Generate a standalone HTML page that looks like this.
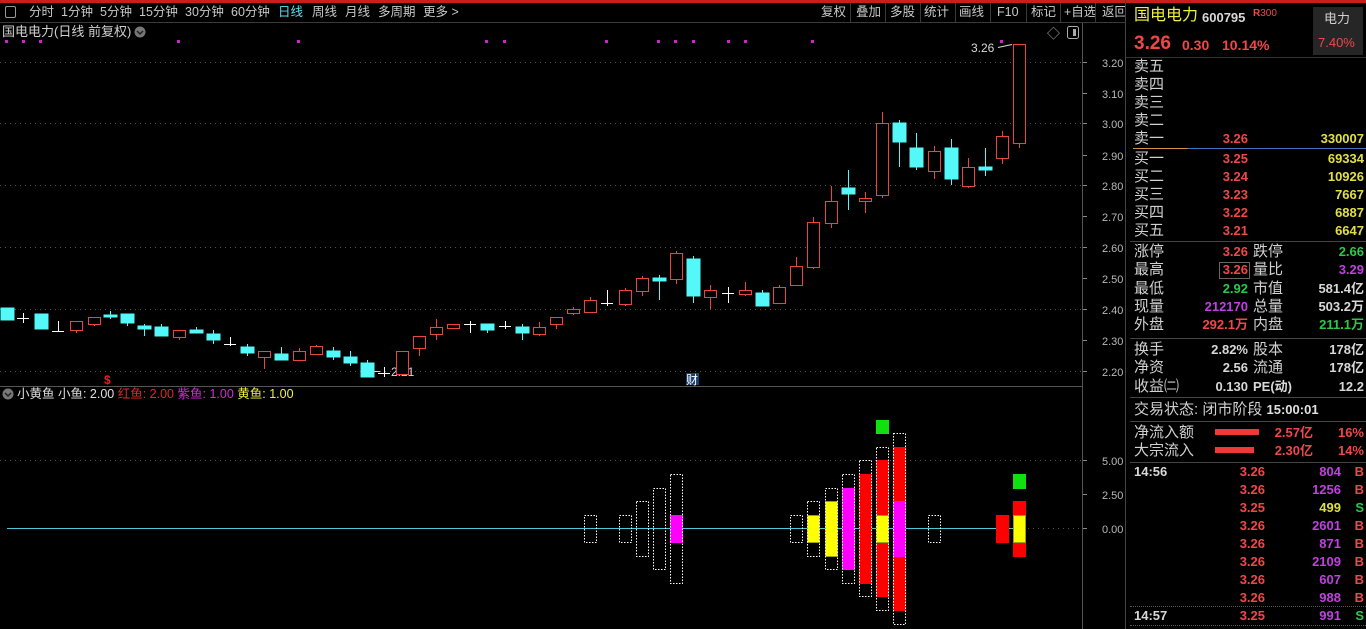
<!DOCTYPE html>
<html><head><meta charset="utf-8"><style>
*{margin:0;padding:0;box-sizing:border-box}
body{width:1366px;height:629px;background:#000;overflow:hidden;position:relative;font-family:"Liberation Sans","Noto Sans CJK SC",sans-serif;color:#c8c8c8}
.t{position:absolute;white-space:nowrap;line-height:18px}
.l{font-size:15px;color:#d0d0d0;left:1134px}
.n{font-size:13px;font-weight:bold}
.rd{color:#f04848}.yl{color:#e0e040}.gr{color:#2cc84a}.pu{color:#c040e0}.wh{color:#d8d8d8}
.tb{font-size:12.5px;color:#c8c8c8;top:3px}
</style></head><body>
<div style="position:absolute;left:0;top:0;width:1366px;height:3px;background:#c81e1e"></div>
<div style="position:absolute;left:0;top:22px;width:1126px;height:1px;background:#3a3a3a"></div>
<div style="position:absolute;left:5px;top:6px;width:11px;height:12px;border:1px solid #999;border-radius:2px"></div>
<div class="t tb" style="left:29px">分时</div><div class="t tb" style="left:61px">1分钟</div><div class="t tb" style="left:100px">5分钟</div><div class="t tb" style="left:139px">15分钟</div><div class="t tb" style="left:185px">30分钟</div><div class="t tb" style="left:231px">60分钟</div><div class="t tb" style="left:278px;color:#5ee0f0">日线</div><div class="t tb" style="left:312px">周线</div><div class="t tb" style="left:345px">月线</div><div class="t tb" style="left:378px">多周期</div><div class="t tb" style="left:423px">更多 &gt;</div>
<div class="t tb" style="left:821px">复权</div><div class="t tb" style="left:856px">叠加</div><div class="t tb" style="left:890px">多股</div><div class="t tb" style="left:924px">统计</div><div class="t tb" style="left:959px">画线</div><div class="t tb" style="left:997px">F10</div><div class="t tb" style="left:1031px">标记</div><div class="t tb" style="left:1064px">+自选</div><div class="t tb" style="left:1102px">返回</div>
<svg style="position:absolute;left:0;top:0" width="1126" height="629">
<g stroke="#3a3a3a"><line x1="850.5" y1="3" x2="850.5" y2="22"/><line x1="885.5" y1="3" x2="885.5" y2="22"/><line x1="920.5" y1="3" x2="920.5" y2="22"/><line x1="955.5" y1="3" x2="955.5" y2="22"/><line x1="990.5" y1="3" x2="990.5" y2="22"/><line x1="1026.5" y1="3" x2="1026.5" y2="22"/><line x1="1060.5" y1="3" x2="1060.5" y2="22"/><line x1="1095.5" y1="3" x2="1095.5" y2="22"/></g>
<line x1="1082.5" y1="23" x2="1082.5" y2="629" stroke="#555"/>
<line x1="1125.5" y1="0" x2="1125.5" y2="629" stroke="#444"/>
<line x1="0" y1="386.5" x2="1083" y2="386.5" stroke="#555"/>
<g stroke="#555" stroke-dasharray="1,4"><line x1="0" y1="62.5" x2="1082" y2="62.5"/><line x1="0" y1="123.5" x2="1082" y2="123.5"/><line x1="0" y1="185.5" x2="1082" y2="185.5"/><line x1="0" y1="247.5" x2="1082" y2="247.5"/><line x1="0" y1="309.5" x2="1082" y2="309.5"/><line x1="0" y1="371.5" x2="1082" y2="371.5"/><line x1="0" y1="460.5" x2="1082" y2="460.5"/><line x1="1013" y1="528.5" x2="1082" y2="528.5"/></g>
<g stroke="#888"><line x1="1083" y1="62.5" x2="1087" y2="62.5"/><line x1="1083" y1="93.5" x2="1087" y2="93.5"/><line x1="1083" y1="123.5" x2="1087" y2="123.5"/><line x1="1083" y1="155.5" x2="1087" y2="155.5"/><line x1="1083" y1="185.5" x2="1087" y2="185.5"/><line x1="1083" y1="216.5" x2="1087" y2="216.5"/><line x1="1083" y1="247.5" x2="1087" y2="247.5"/><line x1="1083" y1="278.5" x2="1087" y2="278.5"/><line x1="1083" y1="309.5" x2="1087" y2="309.5"/><line x1="1083" y1="340.5" x2="1087" y2="340.5"/><line x1="1083" y1="371.5" x2="1087" y2="371.5"/><line x1="1083" y1="460.5" x2="1087" y2="460.5"/><line x1="1083" y1="494.5" x2="1087" y2="494.5"/><line x1="1083" y1="528.5" x2="1087" y2="528.5"/></g>
<g font-family="Liberation Sans" font-size="11" fill="#b8b8b8"><text x="1102" y="67">3.20</text><text x="1102" y="98">3.10</text><text x="1102" y="128">3.00</text><text x="1102" y="160">2.90</text><text x="1102" y="190">2.80</text><text x="1102" y="221">2.70</text><text x="1102" y="252">2.60</text><text x="1102" y="283">2.50</text><text x="1102" y="314">2.40</text><text x="1102" y="345">2.30</text><text x="1102" y="376">2.20</text><text x="1102" y="465">5.00</text><text x="1102" y="499">2.50</text><text x="1102" y="533">0.00</text></g>
<text x="1047" y="38" font-size="13" fill="#aaa">◇</text>
<rect x="1067.5" y="26.5" width="11" height="12" rx="2" fill="none" stroke="#aaa"/><rect x="1073" y="29" width="3" height="7" fill="#aaa"/>
<g fill="#d020d0"><rect x="5" y="40" width="3" height="3"/><rect x="22" y="40" width="3" height="3"/><rect x="39" y="40" width="3" height="3"/><rect x="177" y="40" width="3" height="3"/><rect x="297" y="40" width="3" height="3"/><rect x="485" y="40" width="3" height="3"/><rect x="503" y="40" width="3" height="3"/><rect x="605" y="40" width="3" height="3"/><rect x="657" y="40" width="3" height="3"/><rect x="674" y="40" width="3" height="3"/><rect x="692" y="40" width="3" height="3"/><rect x="727" y="40" width="3" height="3"/><rect x="744" y="40" width="3" height="3"/><rect x="811" y="40" width="3" height="3"/><rect x="1000" y="40" width="3" height="3"/></g>
<text x="971" y="52" font-size="12" fill="#d8d8d8">3.26</text><line x1="998" y1="47.5" x2="1012" y2="44.5" stroke="#ddd"/>
<text x="391" y="376" font-size="12" fill="#d8d8d8">2.21</text><line x1="366" y1="371.5" x2="380" y2="371.5" stroke="#ddd"/>
<text x="104" y="384" font-size="12" font-weight="bold" fill="#e02020">$</text>
<rect x="686" y="373" width="13" height="12" fill="#1c3e6e"/><text x="686" y="384" font-size="12" fill="#fff" font-family="Noto Sans CJK SC">财</text>
<g stroke="#e8463f" fill="#000">
<line x1="76.5" y1="321" x2="76.5" y2="333"/><rect x="70.5" y="321.5" width="12" height="9"/>
<line x1="94.5" y1="317" x2="94.5" y2="326"/><rect x="88.5" y="317.5" width="12" height="7"/>
<line x1="179.5" y1="330" x2="179.5" y2="340"/><rect x="173.5" y="330.5" width="12" height="7"/>
<line x1="264.5" y1="351" x2="264.5" y2="369"/><rect x="258.5" y="351.5" width="12" height="6"/>
<line x1="299.5" y1="348" x2="299.5" y2="360"/><rect x="293.5" y="351.5" width="12" height="9"/>
<line x1="316.5" y1="345" x2="316.5" y2="354"/><rect x="310.5" y="346.5" width="12" height="8"/>
<rect x="396.5" y="351.5" width="12" height="23"/>
<line x1="419.5" y1="336" x2="419.5" y2="356"/><rect x="413.5" y="336.5" width="12" height="12"/>
<line x1="436.5" y1="319" x2="436.5" y2="340"/><rect x="430.5" y="327.5" width="12" height="7"/>
<line x1="453.5" y1="324" x2="453.5" y2="329"/><rect x="447.5" y="324.5" width="12" height="4"/>
<line x1="539.5" y1="322" x2="539.5" y2="336"/><rect x="533.5" y="327.5" width="12" height="7"/>
<line x1="556.5" y1="317" x2="556.5" y2="329"/><rect x="550.5" y="317.5" width="12" height="7"/>
<line x1="573.5" y1="307" x2="573.5" y2="315"/><rect x="567.5" y="309.5" width="12" height="4"/>
<line x1="590.5" y1="297" x2="590.5" y2="312"/><rect x="584.5" y="300.5" width="12" height="12"/>
<line x1="625.5" y1="288" x2="625.5" y2="306"/><rect x="619.5" y="290.5" width="12" height="14"/>
<line x1="642.5" y1="276" x2="642.5" y2="296"/><rect x="636.5" y="278.5" width="12" height="13"/>
<line x1="676.5" y1="251" x2="676.5" y2="284"/><rect x="670.5" y="253.5" width="12" height="26"/>
<line x1="710.5" y1="285" x2="710.5" y2="309"/><rect x="704.5" y="290.5" width="12" height="7"/>
<line x1="745.5" y1="282" x2="745.5" y2="296"/><rect x="739.5" y="290.5" width="12" height="4"/>
<line x1="779.5" y1="285" x2="779.5" y2="303"/><rect x="773.5" y="287.5" width="12" height="16"/>
<line x1="796.5" y1="257" x2="796.5" y2="285"/><rect x="790.5" y="266.5" width="12" height="19"/>
<line x1="813.5" y1="217" x2="813.5" y2="269"/><rect x="807.5" y="222.5" width="12" height="45"/>
<line x1="831.5" y1="186" x2="831.5" y2="228"/><rect x="825.5" y="201.5" width="12" height="22"/>
<line x1="865.5" y1="192" x2="865.5" y2="213"/><rect x="859.5" y="198.5" width="12" height="3"/>
<line x1="882.5" y1="112" x2="882.5" y2="198"/><rect x="876.5" y="123.5" width="12" height="72"/>
<line x1="934.5" y1="146" x2="934.5" y2="179"/><rect x="928.5" y="151.5" width="12" height="20"/>
<line x1="968.5" y1="158" x2="968.5" y2="188"/><rect x="962.5" y="167.5" width="12" height="19"/>
<line x1="1002.5" y1="131" x2="1002.5" y2="164"/><rect x="996.5" y="136.5" width="12" height="22"/>
<line x1="1019.5" y1="44" x2="1019.5" y2="148"/><rect x="1013.5" y="44.5" width="12" height="99"/>
</g>
<g stroke="#54f8f8" fill="#54f8f8">
<rect x="1" y="308" width="13" height="12"/>
<rect x="35" y="314" width="13" height="15"/>
<line x1="110.5" y1="311" x2="110.5" y2="319"/><rect x="104" y="315" width="13" height="2"/>
<line x1="127.5" y1="314" x2="127.5" y2="326"/><rect x="121" y="314" width="13" height="9"/>
<line x1="144.5" y1="324" x2="144.5" y2="336"/><rect x="138" y="326" width="13" height="3"/>
<line x1="161.5" y1="324" x2="161.5" y2="336"/><rect x="155" y="327" width="13" height="9"/>
<line x1="196.5" y1="327" x2="196.5" y2="333"/><rect x="190" y="330" width="13" height="3"/>
<line x1="213.5" y1="330" x2="213.5" y2="344"/><rect x="207" y="334" width="13" height="6"/>
<line x1="247.5" y1="344" x2="247.5" y2="356"/><rect x="241" y="347" width="13" height="6"/>
<line x1="281.5" y1="347" x2="281.5" y2="360"/><rect x="275" y="354" width="13" height="6"/>
<line x1="333.5" y1="347" x2="333.5" y2="360"/><rect x="327" y="351" width="13" height="6"/>
<line x1="350.5" y1="351" x2="350.5" y2="366"/><rect x="344" y="357" width="13" height="6"/>
<line x1="367.5" y1="360" x2="367.5" y2="377"/><rect x="361" y="363" width="13" height="14"/>
<line x1="487.5" y1="324" x2="487.5" y2="333"/><rect x="481" y="324" width="13" height="6"/>
<line x1="522.5" y1="324" x2="522.5" y2="340"/><rect x="516" y="327" width="13" height="6"/>
<line x1="659.5" y1="275" x2="659.5" y2="300"/><rect x="653" y="278" width="13" height="3"/>
<line x1="693.5" y1="256" x2="693.5" y2="303"/><rect x="687" y="259" width="13" height="37"/>
<line x1="762.5" y1="290" x2="762.5" y2="306"/><rect x="756" y="293" width="13" height="13"/>
<line x1="848.5" y1="170" x2="848.5" y2="210"/><rect x="842" y="188" width="13" height="6"/>
<line x1="899.5" y1="120" x2="899.5" y2="167"/><rect x="893" y="123" width="13" height="19"/>
<line x1="916.5" y1="133" x2="916.5" y2="170"/><rect x="910" y="148" width="13" height="19"/>
<line x1="951.5" y1="139" x2="951.5" y2="185"/><rect x="945" y="148" width="13" height="31"/>
<line x1="985.5" y1="148" x2="985.5" y2="176"/><rect x="979" y="167" width="13" height="3"/>
</g>
<g stroke="#fff"><line x1="17" y1="318.5" x2="29" y2="318.5"/><line x1="23.5" y1="313" x2="23.5" y2="323"/><line x1="52" y1="331.5" x2="64" y2="331.5"/><line x1="58.5" y1="321" x2="58.5" y2="332"/><line x1="224" y1="344.5" x2="236" y2="344.5"/><line x1="230.5" y1="337" x2="230.5" y2="346"/><line x1="378" y1="373.5" x2="390" y2="373.5"/><line x1="384.5" y1="367" x2="384.5" y2="377"/><line x1="464" y1="324.5" x2="476" y2="324.5"/><line x1="470.5" y1="321" x2="470.5" y2="333"/><line x1="499" y1="326.5" x2="511" y2="326.5"/><line x1="505.5" y1="321" x2="505.5" y2="329"/><line x1="601" y1="303.5" x2="613" y2="303.5"/><line x1="607.5" y1="290" x2="607.5" y2="306"/><line x1="722" y1="293.5" x2="734" y2="293.5"/><line x1="728.5" y1="287" x2="728.5" y2="303"/></g>
<line x1="7" y1="528.5" x2="1013" y2="528.5" stroke="#4cc8d8"/>
<g fill="#ff00ff"><rect x="670" y="515" width="13" height="28"/><rect x="842" y="488" width="13" height="82"/></g>
<g fill="#ff0000"><rect x="859" y="474" width="13" height="110"/><rect x="876" y="460" width="13" height="137"/><rect x="893" y="447" width="13" height="164"/><rect x="996" y="515" width="13" height="28"/><rect x="1013" y="501" width="13" height="56"/></g>
<g fill="#ffff00" stroke="#a0a000"><rect x="807.5" y="515.5" width="12" height="27"/><rect x="825.5" y="501.5" width="12" height="55"/><rect x="876.5" y="515.5" width="12" height="27"/><rect x="1013.5" y="515.5" width="12" height="27"/></g>
<rect x="893" y="501" width="13" height="56" fill="#ff00ff"/>
<g fill="#10e010"><rect x="876" y="420" width="13" height="14"/><rect x="1013" y="474" width="13" height="15"/></g>
<g fill="none" stroke="#fff" stroke-dasharray="1.5,1.5"><rect x="584.5" y="515.5" width="12" height="27"/><rect x="619.5" y="515.5" width="12" height="27"/><rect x="636.5" y="501.5" width="12" height="55"/><rect x="653.5" y="488.5" width="12" height="81"/><rect x="670.5" y="474.5" width="12" height="109"/><rect x="790.5" y="515.5" width="12" height="27"/><rect x="807.5" y="501.5" width="12" height="55"/><rect x="825.5" y="488.5" width="12" height="81"/><rect x="842.5" y="474.5" width="12" height="109"/><rect x="859.5" y="460.5" width="12" height="136"/><rect x="876.5" y="447.5" width="12" height="163"/><rect x="893.5" y="433.5" width="12" height="191"/><rect x="928.5" y="515.5" width="12" height="27"/></g>
<circle cx="8" cy="394" r="5.5" fill="#777"/><path d="M5 393 L8 396 L11 393" stroke="#222" fill="none" stroke-width="1.5"/>
<circle cx="140" cy="32" r="5.5" fill="#777"/><path d="M137 31 L140 34 L143 31" stroke="#222" fill="none" stroke-width="1.5"/>
</svg>
<div class="t" style="left:2px;top:23px;font-size:13px;color:#d0d0d0">国电电力(日线 前复权)</div>
<div class="t" style="left:17px;top:385px;font-size:12.5px;color:#e0e0e0">小黄鱼 小鱼: 2.00 <span style="color:#e02828">红鱼: 2.00</span> <span style="color:#d030d0">紫鱼: 1.00</span> <span style="color:#f0f040">黄鱼: 1.00</span></div>
<div class="t" style="left:1134px;top:7px;font-size:16px;color:#f0f040">国电电力</div>
<div class="t n" style="left:1202px;top:9px;font-size:13px;color:#d8d8d8">600795</div>
<div class="t" style="left:1253px;top:5px;font-size:10px;color:#f04848"><b>R</b>300</div>
<div style="position:absolute;left:1313px;top:7px;width:50px;height:48px;background:#262626"></div>
<div class="t" style="left:1324px;top:10px;font-size:13px;color:#d0d0d0">电力</div>
<div class="t" style="left:1318px;top:34px;font-size:13px;color:#f04848">7.40%</div>
<div class="t rd" style="left:1134px;top:33px;font-size:19px;font-weight:bold;line-height:22px">3.26</div>
<div class="t rd n" style="left:1182px;top:36px;font-size:14px">0.30</div>
<div class="t rd n" style="left:1222px;top:36px;font-size:14px">10.14%</div>
<div style="position:absolute;left:1126px;top:57px;width:240px;height:1px;background:#333"></div>
<div class="t l" style="top:58px">卖五</div><div class="t l" style="top:76px">卖四</div><div class="t l" style="top:94px">卖三</div><div class="t l" style="top:112px">卖二</div><div class="t l" style="top:130px">卖一</div>
<div class="t n rd" style="right:118px;top:130px">3.26</div><div class="t n yl" style="right:2px;top:130px">330007</div>
<div style="position:absolute;left:1133px;top:148px;width:55px;height:1px;background:#d09040"></div><div style="position:absolute;left:1188px;top:148px;width:178px;height:1px;background:#4070c0"></div>
<div class="t l" style="top:150px">买一</div><div class="t l" style="top:168px">买二</div><div class="t l" style="top:186px">买三</div><div class="t l" style="top:204px">买四</div><div class="t l" style="top:222px">买五</div>
<div class="t n rd" style="right:118px;top:150px">3.25</div><div class="t n yl" style="right:2px;top:150px">69334</div>
<div class="t n rd" style="right:118px;top:168px">3.24</div><div class="t n yl" style="right:2px;top:168px">10926</div>
<div class="t n rd" style="right:118px;top:186px">3.23</div><div class="t n yl" style="right:2px;top:186px">7667</div>
<div class="t n rd" style="right:118px;top:204px">3.22</div><div class="t n yl" style="right:2px;top:204px">6887</div>
<div class="t n rd" style="right:118px;top:222px">3.21</div><div class="t n yl" style="right:2px;top:222px">6647</div>
<div style="position:absolute;left:1130px;top:241px;width:236px;height:1px;background:#444"></div>
<div class="t l" style="top:243px">涨停</div><div class="t l" style="top:261px">最高</div><div class="t l" style="top:280px">最低</div><div class="t l" style="top:298px">现量</div><div class="t l" style="top:316px">外盘</div>
<div class="t l" style="left:1253px;top:243px">跌停</div><div class="t l" style="left:1253px;top:261px">量比</div><div class="t l" style="left:1253px;top:280px">市值</div><div class="t l" style="left:1253px;top:298px">总量</div><div class="t l" style="left:1253px;top:316px">内盘</div>
<div class="t n rd" style="right:118px;top:243px">3.26</div><div class="t n gr" style="right:2px;top:243px">2.66</div>
<div style="position:absolute;left:1219px;top:262px;width:31px;height:17px;border:1px solid #666"></div>
<div class="t n rd" style="right:118px;top:261px">3.26</div><div class="t n pu" style="right:2px;top:261px">3.29</div>
<div class="t n gr" style="right:118px;top:280px">2.92</div><div class="t n wh" style="right:2px;top:280px">581.4亿</div>
<div class="t n pu" style="right:118px;top:298px">212170</div><div class="t n wh" style="right:2px;top:298px">503.2万</div>
<div class="t n rd" style="right:118px;top:316px">292.1万</div><div class="t n gr" style="right:2px;top:316px">211.1万</div>
<div style="position:absolute;left:1130px;top:338px;width:236px;height:1px;background:#444"></div>
<div class="t l" style="top:341px">换手</div><div class="t l" style="top:359px">净资</div><div class="t l" style="top:378px">收益㈡</div>
<div class="t l" style="left:1253px;top:341px">股本</div><div class="t l" style="left:1253px;top:359px">流通</div><div class="t n wh" style="left:1253px;top:378px">PE(动)</div>
<div class="t n wh" style="right:118px;top:341px">2.82%</div><div class="t n wh" style="right:2px;top:341px">178亿</div>
<div class="t n wh" style="right:118px;top:359px">2.56</div><div class="t n wh" style="right:2px;top:359px">178亿</div>
<div class="t n wh" style="right:118px;top:378px">0.130</div><div class="t n wh" style="right:2px;top:378px">12.2</div>
<div style="position:absolute;left:1130px;top:397px;width:236px;height:1px;background:#444"></div>
<div class="t l" style="top:401px">交易状态: 闭市阶段 <b style="font-size:13px;color:#e0e0e0">15:00:01</b></div>
<div style="position:absolute;left:1130px;top:421px;width:236px;height:1px;background:#444"></div>
<div class="t l" style="top:424px">净流入额</div><div class="t l" style="top:442px">大宗流入</div>
<div style="position:absolute;left:1215px;top:429px;width:44px;height:6px;background:#f03838"></div>
<div style="position:absolute;left:1215px;top:447px;width:39px;height:6px;background:#f03838"></div>
<div class="t n rd" style="right:53px;top:424px">2.57亿</div><div class="t n rd" style="right:2px;top:424px">16%</div>
<div class="t n rd" style="right:53px;top:442px">2.30亿</div><div class="t n rd" style="right:2px;top:442px">14%</div>
<div style="position:absolute;left:1130px;top:462px;width:236px;height:1px;background:#444"></div>
<div class="t n wh" style="left:1134px;top:463px">14:56</div>
<div class="t n rd" style="right:101px;top:463px">3.26</div><div class="t n pu" style="right:25px;top:463px">804</div><div class="t n rd" style="right:2px;top:463px">B</div>
<div class="t n rd" style="right:101px;top:481px">3.26</div><div class="t n pu" style="right:25px;top:481px">1256</div><div class="t n rd" style="right:2px;top:481px">B</div>
<div class="t n rd" style="right:101px;top:499px">3.25</div><div class="t n yl" style="right:25px;top:499px">499</div><div class="t n gr" style="right:2px;top:499px">S</div>
<div class="t n rd" style="right:101px;top:517px">3.26</div><div class="t n pu" style="right:25px;top:517px">2601</div><div class="t n rd" style="right:2px;top:517px">B</div>
<div class="t n rd" style="right:101px;top:535px">3.26</div><div class="t n pu" style="right:25px;top:535px">871</div><div class="t n rd" style="right:2px;top:535px">B</div>
<div class="t n rd" style="right:101px;top:553px">3.26</div><div class="t n pu" style="right:25px;top:553px">2109</div><div class="t n rd" style="right:2px;top:553px">B</div>
<div class="t n rd" style="right:101px;top:571px">3.26</div><div class="t n pu" style="right:25px;top:571px">607</div><div class="t n rd" style="right:2px;top:571px">B</div>
<div class="t n rd" style="right:101px;top:589px">3.26</div><div class="t n pu" style="right:25px;top:589px">988</div><div class="t n rd" style="right:2px;top:589px">B</div>
<div style="position:absolute;left:1130px;top:606px;width:236px;border-top:1px dotted #555"></div>
<div class="t n wh" style="left:1134px;top:607px">14:57</div>
<div class="t n rd" style="right:101px;top:607px">3.25</div><div class="t n pu" style="right:25px;top:607px">991</div><div class="t n gr" style="right:2px;top:607px">S</div>
<div style="position:absolute;left:1130px;top:625px;width:236px;border-top:1px dotted #555"></div>
</body></html>
